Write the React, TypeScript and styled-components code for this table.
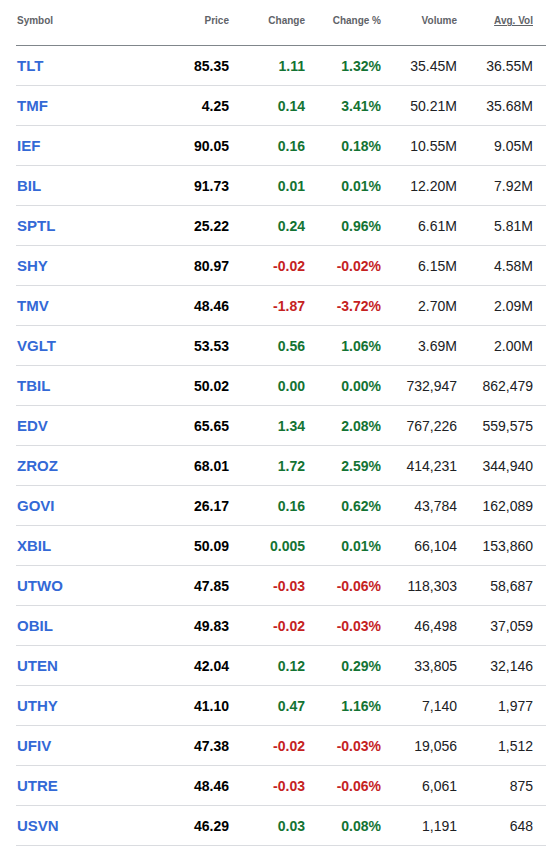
import styled, { createGlobalStyle } from "styled-components";

type Row = {
  symbol: string;
  price: string;
  change: string;
  pct: string;
  volume: string;
  avg: string;
};

const rows: Row[] = [
  { symbol: "TLT", price: "85.35", change: "1.11", pct: "1.32%", volume: "35.45M", avg: "36.55M" },
  { symbol: "TMF", price: "4.25", change: "0.14", pct: "3.41%", volume: "50.21M", avg: "35.68M" },
  { symbol: "IEF", price: "90.05", change: "0.16", pct: "0.18%", volume: "10.55M", avg: "9.05M" },
  { symbol: "BIL", price: "91.73", change: "0.01", pct: "0.01%", volume: "12.20M", avg: "7.92M" },
  { symbol: "SPTL", price: "25.22", change: "0.24", pct: "0.96%", volume: "6.61M", avg: "5.81M" },
  { symbol: "SHY", price: "80.97", change: "-0.02", pct: "-0.02%", volume: "6.15M", avg: "4.58M" },
  { symbol: "TMV", price: "48.46", change: "-1.87", pct: "-3.72%", volume: "2.70M", avg: "2.09M" },
  { symbol: "VGLT", price: "53.53", change: "0.56", pct: "1.06%", volume: "3.69M", avg: "2.00M" },
  { symbol: "TBIL", price: "50.02", change: "0.00", pct: "0.00%", volume: "732,947", avg: "862,479" },
  { symbol: "EDV", price: "65.65", change: "1.34", pct: "2.08%", volume: "767,226", avg: "559,575" },
  { symbol: "ZROZ", price: "68.01", change: "1.72", pct: "2.59%", volume: "414,231", avg: "344,940" },
  { symbol: "GOVI", price: "26.17", change: "0.16", pct: "0.62%", volume: "43,784", avg: "162,089" },
  { symbol: "XBIL", price: "50.09", change: "0.005", pct: "0.01%", volume: "66,104", avg: "153,860" },
  { symbol: "UTWO", price: "47.85", change: "-0.03", pct: "-0.06%", volume: "118,303", avg: "58,687" },
  { symbol: "OBIL", price: "49.83", change: "-0.02", pct: "-0.03%", volume: "46,498", avg: "37,059" },
  { symbol: "UTEN", price: "42.04", change: "0.12", pct: "0.29%", volume: "33,805", avg: "32,146" },
  { symbol: "UTHY", price: "41.10", change: "0.47", pct: "1.16%", volume: "7,140", avg: "1,977" },
  { symbol: "UFIV", price: "47.38", change: "-0.02", pct: "-0.03%", volume: "19,056", avg: "1,512" },
  { symbol: "UTRE", price: "48.46", change: "-0.03", pct: "-0.06%", volume: "6,061", avg: "875" },
  { symbol: "USVN", price: "46.29", change: "0.03", pct: "0.08%", volume: "1,191", avg: "648" },
];

const GlobalStyle = createGlobalStyle`
  body {
    margin: 0;
    background: #fff;
    font-family: "Liberation Sans", Arial, sans-serif;
  }
`;

const Table = styled.table`
  margin-left: 16px;
  width: 530px;
  border-collapse: collapse;
  table-layout: fixed;
`;

const Head = styled.th<{ $align?: string; $underline?: boolean }>`
  height: 41px;
  padding: 0 ${(p) => (p.$underline ? "13px" : "0")} 4px 1px;
  text-align: ${(p) => p.$align || "right"};
  font-size: 10px;
  font-weight: bold;
  color: #5f6368;
  border-bottom: 1px solid #80868b;
  text-decoration: ${(p) => (p.$underline ? "underline" : "none")};
  vertical-align: middle;
`;

const Tr = styled.tr`
  height: 40px;
  border-bottom: 1px solid #dadce0;
`;

const Symbol = styled.td`
  padding: 0 0 0 1px;
  font-size: 15px;
  font-weight: bold;
  color: #3369d6;
  text-align: left;
`;

const Cell = styled.td<{ $tone?: "up" | "down" | "plain"; $bold?: boolean; $last?: boolean }>`
  padding: 0 ${(p) => (p.$last ? "13px" : "0")} 0 0;
  text-align: right;
  font-size: 14px;
  font-weight: ${(p) => (p.$bold ? "bold" : "normal")};
  color: ${(p) =>
    p.$tone === "up" ? "#137333" : p.$tone === "down" ? "#c5221f" : p.$bold ? "#000" : "#202124"};
`;

const tone = (v: string) => (v.startsWith("-") ? "down" : "up");

export default function App() {
  return (
    <>
      <GlobalStyle />
      <Table>
        <colgroup>
          <col style={{ width: 137 }} />
          <col style={{ width: 76 }} />
          <col style={{ width: 76 }} />
          <col style={{ width: 76 }} />
          <col style={{ width: 76 }} />
          <col style={{ width: 89 }} />
        </colgroup>
        <thead>
          <tr>
            <Head $align="left">Symbol</Head>
            <Head>Price</Head>
            <Head>Change</Head>
            <Head>Change %</Head>
            <Head>Volume</Head>
            <Head $underline>Avg. Vol</Head>
          </tr>
        </thead>
        <tbody>
          {rows.map((r) => (
            <Tr key={r.symbol}>
              <Symbol>{r.symbol}</Symbol>
              <Cell $bold>{r.price}</Cell>
              <Cell $bold $tone={tone(r.change)}>{r.change}</Cell>
              <Cell $bold $tone={tone(r.pct)}>{r.pct}</Cell>
              <Cell>{r.volume}</Cell>
              <Cell $last>{r.avg}</Cell>
            </Tr>
          ))}
        </tbody>
      </Table>
    </>
  );
}
